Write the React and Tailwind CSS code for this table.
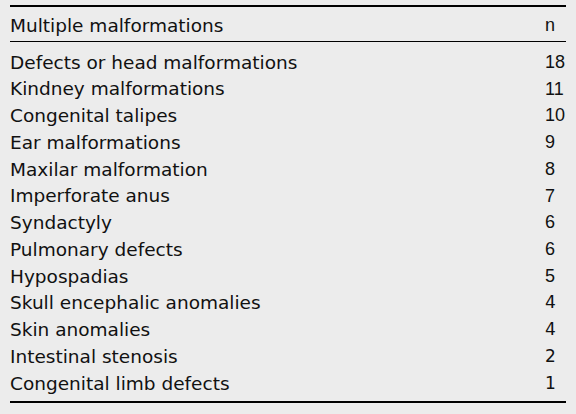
const rows = [
  ['Defects or head malformations', '18'],
  ['Kindney malformations', '11'],
  ['Congenital talipes', '10'],
  ['Ear malformations', '9'],
  ['Maxilar malformation', '8'],
  ['Imperforate anus', '7'],
  ['Syndactyly', '6'],
  ['Pulmonary defects', '6'],
  ['Hypospadias', '5'],
  ['Skull encephalic anomalies', '4', true],
  ['Skin anomalies', '4', true],
  ['Intestinal stenosis', '2', true],
  ['Congenital limb defects', '1', true],
];

export default function App() {
  return (
    <div className="w-[576px] h-[414px] bg-[#ececec] pt-[5px] px-[10px] font-['DejaVu_Sans',sans-serif] text-[#111]">
      <div className="border-t-2 border-b-2 border-black">
        <div className="flex items-center h-[35px] pt-[3px] border-b border-black text-[18.5px]">
          <span className="flex-1">Multiple malformations</span>
          <span className="w-[21px] font-['Liberation_Sans',sans-serif] text-[18px]">n</span>
        </div>
        <div className="pt-[7px] pb-[4px]">
          {rows.map(([label, n, alt]) => (
            <div key={label} className="flex items-center h-[26.75px] text-[18.5px]">
              <span className="flex-1">{label}</span>
              <span
                className={
                  alt
                    ? 'w-[21px] text-[17px]'
                    : "w-[21px] font-['Liberation_Sans',sans-serif] text-[18px]"
                }
              >
                {n}
              </span>
            </div>
          ))}
        </div>
      </div>
    </div>
  );
}
